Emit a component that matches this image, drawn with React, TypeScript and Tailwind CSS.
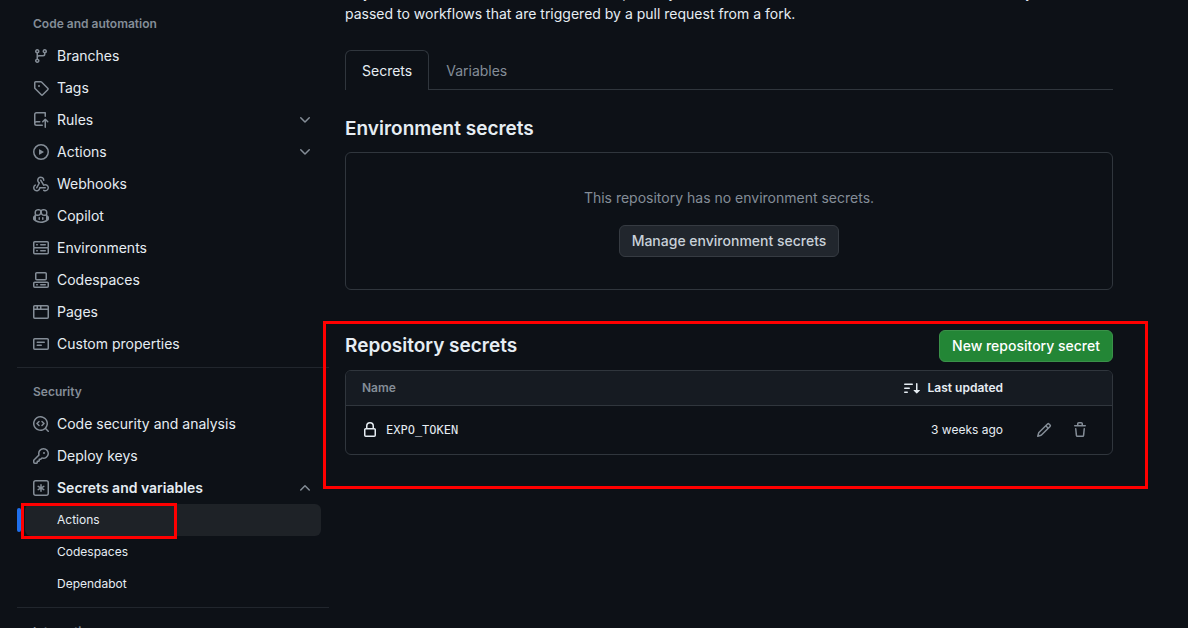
import React from "react";

const PATHS = {
  branch:
    "M9.5 3.25a2.25 2.25 0 1 1 3 2.122V6A2.5 2.5 0 0 1 10 8.5H6a1 1 0 0 0-1 1v1.128a2.251 2.251 0 1 1-1.5 0V5.372a2.25 2.25 0 1 1 1.5 0v1.836A2.493 2.493 0 0 1 6 7h4a1 1 0 0 0 1-1v-.628A2.25 2.25 0 0 1 9.5 3.25Zm-6 0a.75.75 0 1 0 1.5 0 .75.75 0 0 0-1.5 0Zm8.25-.75a.75.75 0 1 0 0 1.5.75.75 0 0 0 0-1.5ZM4.25 12a.75.75 0 1 0 0 1.5.75.75 0 0 0 0-1.5Z",
  tag: "M1 7.775V2.75C1 1.784 1.784 1 2.75 1h5.025c.464 0 .91.184 1.238.513l6.25 6.25a1.75 1.75 0 0 1 0 2.474l-5.026 5.026a1.75 1.75 0 0 1-2.474 0l-6.25-6.25A1.752 1.752 0 0 1 1 7.775Zm1.5 0c0 .066.026.13.073.177l6.25 6.25a.25.25 0 0 0 .354 0l5.025-5.025a.25.25 0 0 0 0-.354l-6.25-6.25a.25.25 0 0 0-.177-.073H2.75a.25.25 0 0 0-.25.25ZM6 5a1 1 0 1 1 0 2 1 1 0 0 1 0-2Z",
  push: "M1 2.5A2.5 2.5 0 0 1 3.5 0h8.75a.75.75 0 0 1 .75.75v3.5a.75.75 0 0 1-1.5 0V1.5h-8a1 1 0 0 0-1 1v6.708A2.493 2.493 0 0 1 3.5 9h3.25a.75.75 0 0 1 0 1.5H3.5a1 1 0 0 0 0 2h5.75a.75.75 0 0 1 0 1.5H3.5A2.5 2.5 0 0 1 1 11.5Zm13.23 7.79-1.224-1.224v6.184a.75.75 0 0 1-1.5 0V9.066L10.28 10.29a.75.75 0 0 1-1.06-1.061l2.505-2.504a.75.75 0 0 1 1.06 0L15.29 9.23a.751.751 0 0 1-.018 1.042.751.751 0 0 1-1.042.018Z",
  play: "M8 0a8 8 0 1 1 0 16A8 8 0 0 1 8 0ZM1.5 8a6.5 6.5 0 1 0 13 0 6.5 6.5 0 0 0-13 0Zm4.879-2.773 4.264 2.559a.25.25 0 0 1 0 .428l-4.264 2.559A.25.25 0 0 1 6 10.559V5.442a.25.25 0 0 1 .379-.215Z",
  webhook:
    "M5.5 4.25a2.25 2.25 0 0 1 4.5 0 .75.75 0 0 0 1.5 0 3.75 3.75 0 1 0-6.14 2.889l-2.272 4.258a.75.75 0 0 0 1.324.706L7 7.25a.75.75 0 0 0-.309-1.015A2.25 2.25 0 0 1 5.5 4.25ZM7.364 3.607a.75.75 0 0 1 1.03.257l2.608 4.349a3.75 3.75 0 1 1-.628 6.785.75.75 0 0 1 .752-1.299 2.25 2.25 0 1 0-.033-3.88.75.75 0 0 1-1.03-.256L7.107 4.636a.75.75 0 0 1 .257-1.03ZM2.9 8.776A.75.75 0 0 1 2.625 9.8 2.25 2.25 0 1 0 6 11.75a.75.75 0 0 1 .75-.751h5.5a.75.75 0 0 1 0 1.5H7.425a3.751 3.751 0 1 1-5.55-3.998.75.75 0 0 1 1.024.274Z",
  copilot:
    "M7.998 15.035c-4.562 0-7.873-2.914-7.998-3.749V9.338c.085-.628.677-1.686 1.588-2.065.013-.07.024-.143.036-.218.029-.183.06-.384.126-.612-.201-.508-.254-1.084-.254-1.656 0-.87.128-1.769.693-2.484.579-.733 1.494-1.124 2.724-1.261 1.206-.134 2.262.034 2.944.765.05.053.096.108.139.165.044-.057.094-.112.143-.165.682-.731 1.738-.899 2.944-.765 1.23.137 2.145.528 2.724 1.261.566.715.693 1.614.693 2.484 0 .572-.053 1.148-.254 1.656.066.228.098.429.126.612.012.076.024.148.037.218.924.385 1.522 1.471 1.591 2.095v1.872c0 .766-3.351 3.795-8.002 3.795Zm0-1.485c2.28 0 4.584-1.11 5.002-1.433V7.862l-.023-.116c-.49.21-1.075.291-1.727.291-1.146 0-2.059-.327-2.71-.991A3.222 3.222 0 0 1 8 6.303a3.24 3.24 0 0 1-.544.743c-.65.664-1.563.991-2.71.991-.652 0-1.236-.081-1.727-.291l-.023.116v4.255c.419.323 2.722 1.433 5.002 1.433ZM6.762 2.83c-.193-.206-.637-.413-1.682-.297-1.019.113-1.479.404-1.713.7-.247.312-.369.789-.369 1.554 0 .793.129 1.171.308 1.371.162.181.519.379 1.442.379.853 0 1.339-.235 1.638-.54.315-.322.527-.827.617-1.553.117-.935-.037-1.395-.241-1.614Zm4.155-.297c-1.044-.116-1.488.091-1.681.297-.204.219-.359.679-.242 1.614.091.726.303 1.231.618 1.553.299.305.784.54 1.638.54.922 0 1.28-.198 1.442-.379.179-.2.308-.578.308-1.371 0-.765-.123-1.242-.37-1.554-.233-.296-.693-.587-1.713-.7ZM6.25 9.037a.75.75 0 0 1 .75.75v1.501a.75.75 0 0 1-1.5 0V9.787a.75.75 0 0 1 .75-.75Zm4.25.75v1.501a.75.75 0 0 1-1.5 0V9.787a.75.75 0 0 1 1.5 0Z",
  server:
    "M1.75 1h12.5c.966 0 1.75.784 1.75 1.75v4c0 .372-.116.717-.314 1 .198.283.314.628.314 1v4a1.75 1.75 0 0 1-1.75 1.75H1.75A1.75 1.75 0 0 1 0 12.75v-4c0-.358.109-.707.314-1a1.739 1.739 0 0 1-.314-1v-4C0 1.784.784 1 1.75 1ZM1.5 2.75v4c0 .138.112.25.25.25h12.5a.25.25 0 0 0 .25-.25v-4a.25.25 0 0 0-.25-.25H1.75a.25.25 0 0 0-.25.25Zm.25 5.75a.25.25 0 0 0-.25.25v4c0 .138.112.25.25.25h12.5a.25.25 0 0 0 .25-.25v-4a.25.25 0 0 0-.25-.25ZM7 4.75A.75.75 0 0 1 7.75 4h4.5a.75.75 0 0 1 0 1.5h-4.5A.75.75 0 0 1 7 4.75ZM7.75 10h4.5a.75.75 0 0 1 0 1.5h-4.5a.75.75 0 0 1 0-1.5ZM3 4.75A.75.75 0 0 1 3.75 4h.5a.75.75 0 0 1 0 1.5h-.5A.75.75 0 0 1 3 4.75ZM3.75 10h.5a.75.75 0 0 1 0 1.5h-.5a.75.75 0 0 1 0-1.5Z",
  codespaces:
    "M0 11.25c0-.966.784-1.75 1.75-1.75h12.5c.966 0 1.75.784 1.75 1.75v3A1.75 1.75 0 0 1 14.25 16H1.75A1.75 1.75 0 0 1 0 14.25Zm2-9.5C2 .784 2.784 0 3.75 0h8.5C13.216 0 14 .784 14 1.75v5a1.75 1.75 0 0 1-1.75 1.75h-8.5A1.75 1.75 0 0 1 2 6.75Zm1.75-.25a.25.25 0 0 0-.25.25v5c0 .138.112.25.25.25h8.5a.25.25 0 0 0 .25-.25v-5a.25.25 0 0 0-.25-.25Zm-2 9.5a.25.25 0 0 0-.25.25v3c0 .138.112.25.25.25h12.5a.25.25 0 0 0 .25-.25v-3a.25.25 0 0 0-.25-.25ZM7 12.75a.75.75 0 0 1 .75-.75h4.5a.75.75 0 0 1 0 1.5h-4.5a.75.75 0 0 1-.75-.75Zm-4 0a.75.75 0 0 1 .75-.75h.5a.75.75 0 0 1 0 1.5h-.5a.75.75 0 0 1-.75-.75Z",
  browser:
    "M0 2.75C0 1.784.784 1 1.75 1h12.5c.966 0 1.75.784 1.75 1.75v10.5A1.75 1.75 0 0 1 14.25 15H1.75A1.75 1.75 0 0 1 0 13.25ZM14.5 6h-13v7.25c0 .138.112.25.25.25h12.5a.25.25 0 0 0 .25-.25Zm-6-3.5v2h6V2.75a.25.25 0 0 0-.25-.25ZM5 2.5v2h2v-2Zm-3.25 0a.25.25 0 0 0-.25.25V4.5h2v-2Z",
  note: "M0 3.75C0 2.784.784 2 1.75 2h12.5c.966 0 1.75.784 1.75 1.75v8.5A1.75 1.75 0 0 1 14.25 14H1.75A1.75 1.75 0 0 1 0 12.25Zm1.75-.25a.25.25 0 0 0-.25.25v8.5c0 .138.112.25.25.25h12.5a.25.25 0 0 0 .25-.25v-8.5a.25.25 0 0 0-.25-.25ZM3.5 6.25a.75.75 0 0 1 .75-.75h7a.75.75 0 0 1 0 1.5h-7a.75.75 0 0 1-.75-.75Zm.75 2.25h4a.75.75 0 0 1 0 1.5h-4a.75.75 0 0 1 0-1.5Z",
  codescan:
    "M8.47 4.97a.75.75 0 0 0 0 1.06L9.94 7.5 8.47 8.97a.75.75 0 1 0 1.06 1.06l2-2a.75.75 0 0 0 0-1.06l-2-2a.75.75 0 0 0-1.06 0ZM6.53 6.03a.75.75 0 0 0-1.06-1.06l-2 2a.75.75 0 0 0 0 1.06l2 2a.75.75 0 1 0 1.06-1.06L5.06 7.5l1.47-1.47ZM12.246 13.307a7.501 7.501 0 1 1 1.06-1.06l2.474 2.473a.749.749 0 1 1-1.06 1.06ZM1.5 7.5a6.002 6.002 0 0 0 3.608 5.504 6.002 6.002 0 0 0 6.486-1.117.748.748 0 0 1 .292-.293A6 6 0 1 0 1.5 7.5Z",
  key: "M10.5 0a5.499 5.499 0 1 1-1.288 10.848l-.932.932a.749.749 0 0 1-.53.22H7v.75a.749.749 0 0 1-.22.53l-.5.5a.749.749 0 0 1-.53.22H5v.75a.749.749 0 0 1-.22.53l-.5.5a.749.749 0 0 1-.53.22h-2A1.75 1.75 0 0 1 0 14.25v-2c0-.199.079-.389.22-.53l4.932-4.932A5.5 5.5 0 0 1 10.5 0Zm-4 5.5c-.001.431.069.86.205 1.269a.75.75 0 0 1-.181.768L1.5 12.56v1.69c0 .138.112.25.25.25h1.69l.06-.06v-1.19a.75.75 0 0 1 .75-.75h1.19l.06-.06v-1.19a.75.75 0 0 1 .75-.75h1.19l1.023-1.025a.75.75 0 0 1 .768-.18A4 4 0 1 0 6.5 5.5ZM11 6a1 1 0 1 1 0-2 1 1 0 0 1 0 2Z",
  asterisk:
    "M0 2.75A2.75 2.75 0 0 1 2.75 0h10.5A2.75 2.75 0 0 1 16 2.75v10.5A2.75 2.75 0 0 1 13.25 16H2.75A2.75 2.75 0 0 1 0 13.25ZM2.75 1.5c-.69 0-1.25.56-1.25 1.25v10.5c0 .69.56 1.25 1.25 1.25h10.5c.69 0 1.25-.56 1.25-1.25V2.75c0-.69-.56-1.25-1.25-1.25ZM8 4a.75.75 0 0 1 .75.75V6.7l1.69-.975a.75.75 0 0 1 .75 1.3L9.5 8l1.69.976a.75.75 0 0 1-.75 1.298L8.75 9.3v1.951a.75.75 0 0 1-1.5 0V9.299l-1.69.976a.75.75 0 0 1-.75-1.3L6.5 8l-1.69-.975a.75.75 0 0 1 .75-1.3l1.69.976V4.75A.75.75 0 0 1 8 4Z",
  down: "M12.78 5.22a.749.749 0 0 1 0 1.06l-4.25 4.25a.749.749 0 0 1-1.06 0L3.22 6.28a.749.749 0 1 1 1.06-1.06L8 8.939l3.72-3.719a.749.749 0 0 1 1.06 0Z",
  up: "M3.22 10.53a.749.749 0 0 1 0-1.06l4.25-4.25a.749.749 0 0 1 1.06 0l4.25 4.25a.749.749 0 1 1-1.06 1.06L8 6.811 4.28 10.53a.749.749 0 0 1-1.06 0Z",
  lock: "M4 4a4 4 0 0 1 8 0v2h.25c.966 0 1.75.784 1.75 1.75v5.5A1.75 1.75 0 0 1 12.25 15h-8.5A1.75 1.75 0 0 1 2 13.25v-5.5C2 6.784 2.784 6 3.75 6H4Zm8.25 3.5h-8.5a.25.25 0 0 0-.25.25v5.5c0 .138.112.25.25.25h8.5a.25.25 0 0 0 .25-.25v-5.5a.25.25 0 0 0-.25-.25ZM10.5 6V4a2.5 2.5 0 1 0-5 0v2Z",
  sort: "M0 4.25a.75.75 0 0 1 .75-.75h7.5a.75.75 0 0 1 0 1.5H.75A.75.75 0 0 1 0 4.25Zm0 4a.75.75 0 0 1 .75-.75h4.5a.75.75 0 0 1 0 1.5H.75A.75.75 0 0 1 0 8.25Zm0 4a.75.75 0 0 1 .75-.75h2.5a.75.75 0 0 1 0 1.5H.75a.75.75 0 0 1-.75-.75ZM13.5 10h2.25a.25.25 0 0 1 .177.427l-3 3a.25.25 0 0 1-.354 0l-3-3A.25.25 0 0 1 9.75 10H12V3.75a.75.75 0 0 1 1.5 0V10Z",
  pencil:
    "M11.013 1.427a1.75 1.75 0 0 1 2.474 0l1.086 1.086a1.75 1.75 0 0 1 0 2.474l-8.61 8.61c-.21.21-.47.364-.756.445l-3.251.93a.75.75 0 0 1-.927-.928l.929-3.25c.081-.286.235-.547.445-.758l8.61-8.61Zm.176 4.823L9.75 4.81l-6.286 6.287a.253.253 0 0 0-.064.108l-.558 1.953 1.953-.558a.253.253 0 0 0 .108-.064Zm1.238-3.763a.25.25 0 0 0-.354 0L10.811 3.75l1.439 1.44 1.263-1.263a.25.25 0 0 0 0-.354Z",
  trash:
    "M11 1.75V3h2.25a.75.75 0 0 1 0 1.5H2.75a.75.75 0 0 1 0-1.5H5V1.75C5 .784 5.784 0 6.75 0h2.5C10.216 0 11 .784 11 1.75ZM4.496 6.675l.66 6.6a.25.25 0 0 0 .249.225h5.19a.25.25 0 0 0 .249-.225l.66-6.6a.75.75 0 0 1 1.492.149l-.66 6.6A1.748 1.748 0 0 1 10.595 15h-5.19a1.75 1.75 0 0 1-1.741-1.575l-.66-6.6a.75.75 0 1 1 1.492-.15ZM6.5 1.75V3h3V1.75a.25.25 0 0 0-.25-.25h-2.5a.25.25 0 0 0-.25.25Z",
};

type IconName = keyof typeof PATHS;

function Icon({ name }: { name: IconName }) {
  return (
    <svg viewBox="0 0 16 16" className="size-4 shrink-0 fill-current" aria-hidden="true">
      <path d={PATHS[name]} />
    </svg>
  );
}

type Item = { icon: IconName; label: string; state?: "closed" | "open" };

const CODE_ITEMS: Item[] = [
  { icon: "branch", label: "Branches" },
  { icon: "tag", label: "Tags" },
  { icon: "push", label: "Rules", state: "closed" },
  { icon: "play", label: "Actions", state: "closed" },
  { icon: "webhook", label: "Webhooks" },
  { icon: "copilot", label: "Copilot" },
  { icon: "server", label: "Environments" },
  { icon: "codespaces", label: "Codespaces" },
  { icon: "browser", label: "Pages" },
  { icon: "note", label: "Custom properties" },
];

const SECURITY_ITEMS: Item[] = [
  { icon: "codescan", label: "Code security and analysis" },
  { icon: "key", label: "Deploy keys" },
  { icon: "asterisk", label: "Secrets and variables", state: "open" },
];

function NavItem({ icon, label, state }: Item) {
  const inner = (
    <>
      <span className="text-[#848d97]">
        <Icon name={icon} />
      </span>
      <span className={state === "open" ? "grow font-semibold" : "grow"}>{label}</span>
      {state && (
        <span className="text-[#848d97]">
          <Icon name={state === "open" ? "up" : "down"} />
        </span>
      )}
    </>
  );
  const row = "flex h-8 w-full items-center gap-2 px-2 text-left text-sm";
  return (
    <li>
      {state ? (
        <button type="button" aria-expanded={state === "open"} className={row}>
          {inner}
        </button>
      ) : (
        <a href="#" className={row}>
          {inner}
        </a>
      )}
    </li>
  );
}

function GroupTitle({ children }: { children: React.ReactNode }) {
  return <h3 className="px-4 text-xs leading-4 font-semibold text-[#848d97]">{children}</h3>;
}

function Sidebar() {
  return (
    <nav aria-label="Repository settings" className="w-[312px] shrink-0 pt-4">
      <GroupTitle>Code and automation</GroupTitle>
      <ul className="mt-2 px-2">
        {CODE_ITEMS.map((item) => (
          <NavItem key={item.label} {...item} />
        ))}
      </ul>
      <hr className="mt-[7px] mb-4 border-[#21262d]" />
      <GroupTitle>Security</GroupTitle>
      <ul className="mt-2 px-2">
        {SECURITY_ITEMS.map((item) => (
          <NavItem key={item.label} {...item} />
        ))}
        <li>
          <ul className="text-xs">
            <li className="relative">
              <span className="absolute top-1 -left-2 h-6 w-1 rounded-md bg-[#1f6feb]" />
              <a
                href="#"
                aria-current="page"
                className="flex h-8 items-center rounded-md bg-[#1e2227] pl-8"
              >
                Actions
              </a>
              <span className="pointer-events-none absolute -top-px -left-1 h-9 w-[156px] border-3 border-[#f00]" />
            </li>
            <li>
              <a href="#" className="flex h-8 items-center pl-8">
                Codespaces
              </a>
            </li>
            <li>
              <a href="#" className="flex h-8 items-center pl-8">
                Dependabot
              </a>
            </li>
          </ul>
        </li>
      </ul>
      <hr className="mt-[7px] mb-4 border-[#21262d]" />
      <GroupTitle>Integrations</GroupTitle>
    </nav>
  );
}

function SecretsTable() {
  return (
    <div className="mt-2 overflow-hidden rounded-md border border-[#30363d]">
      <table className="w-full text-xs">
        <thead className="bg-[#161b22]">
          <tr className="h-[34px] border-b border-[#30363d]">
            <th scope="col" className="pl-4 text-left font-semibold text-[#848d97]">
              Name
            </th>
            <th scope="col" className="w-40 font-semibold">
              <button type="button" className="ml-auto flex items-center gap-2">
                <Icon name="sort" />
                Last updated
              </button>
            </th>
            <td className="w-[109px]" />
          </tr>
        </thead>
        <tbody>
          <tr className="h-[49px]">
            <td className="pl-4">
              <span className="flex items-center gap-2 font-['DejaVu_Sans_Mono',monospace]">
                <Icon name="lock" />
                EXPO_TOKEN
              </span>
            </td>
            <td className="text-right">3 weeks ago</td>
            <td>
              <div className="flex justify-end gap-1 pr-4 text-[#848d97]">
                <button type="button" aria-label="Edit EXPO_TOKEN" className="p-2">
                  <Icon name="pencil" />
                </button>
                <button type="button" aria-label="Delete EXPO_TOKEN" className="p-2">
                  <Icon name="trash" />
                </button>
              </div>
            </td>
          </tr>
        </tbody>
      </table>
    </div>
  );
}

export default function App() {
  return (
    <div className="flex h-screen items-start gap-4 overflow-hidden bg-[#0d1117] pr-[75px] pl-[17px] font-['Inter',sans-serif] text-sm text-[#e6edf3]">
      <Sidebar />
      <main className="-mt-[18px] min-w-0 grow">
        <p className="leading-[21px]">
          Anyone with collaborator access to this repository can use these secrets and variables for
          actions. They are not passed to workflows that are triggered by a pull request from a
          fork.
        </p>

        <div role="tablist" className="mt-[26px] flex h-10 border-b border-[#30363d]">
          <button
            type="button"
            role="tab"
            aria-selected="true"
            className="-mb-px h-10 rounded-t-md border border-b-0 border-[#30363d] bg-[#0d1117] px-4"
          >
            Secrets
          </button>
          <button
            type="button"
            role="tab"
            aria-selected="false"
            className="-mb-px h-10 border border-b-0 border-transparent px-4 text-[#848d97]"
          >
            Variables
          </button>
        </div>

        <section className="mt-6">
          <h2 className="text-[19px] leading-[30px] font-semibold">Environment secrets</h2>
          <div className="mt-2 flex h-[138px] flex-col items-center rounded-md border border-[#30363d] pt-[34px]">
            <p className="leading-[22px] text-[#848d97]">
              This repository has no environment secrets.
            </p>
            <button
              type="button"
              className="mt-4 h-8 rounded-md border border-[#363b42] bg-[#21262d] px-3 font-medium text-[#c9d1d9]"
            >
              Manage environment secrets
            </button>
          </div>
        </section>

        <section className="relative mt-10">
          <div className="flex items-center justify-between">
            <h2 className="text-[19px] leading-[30px] font-semibold">Repository secrets</h2>
            <button
              type="button"
              className="h-8 rounded-md border border-[#3a9149] bg-[#238636] px-3 font-medium text-white"
            >
              New repository secret
            </button>
          </div>
          <SecretsTable />
          <div className="pointer-events-none absolute -top-[9px] -right-[35px] -bottom-[34px] -left-[22px] border-3 border-[#f00]" />
        </section>
      </main>
    </div>
  );
}
